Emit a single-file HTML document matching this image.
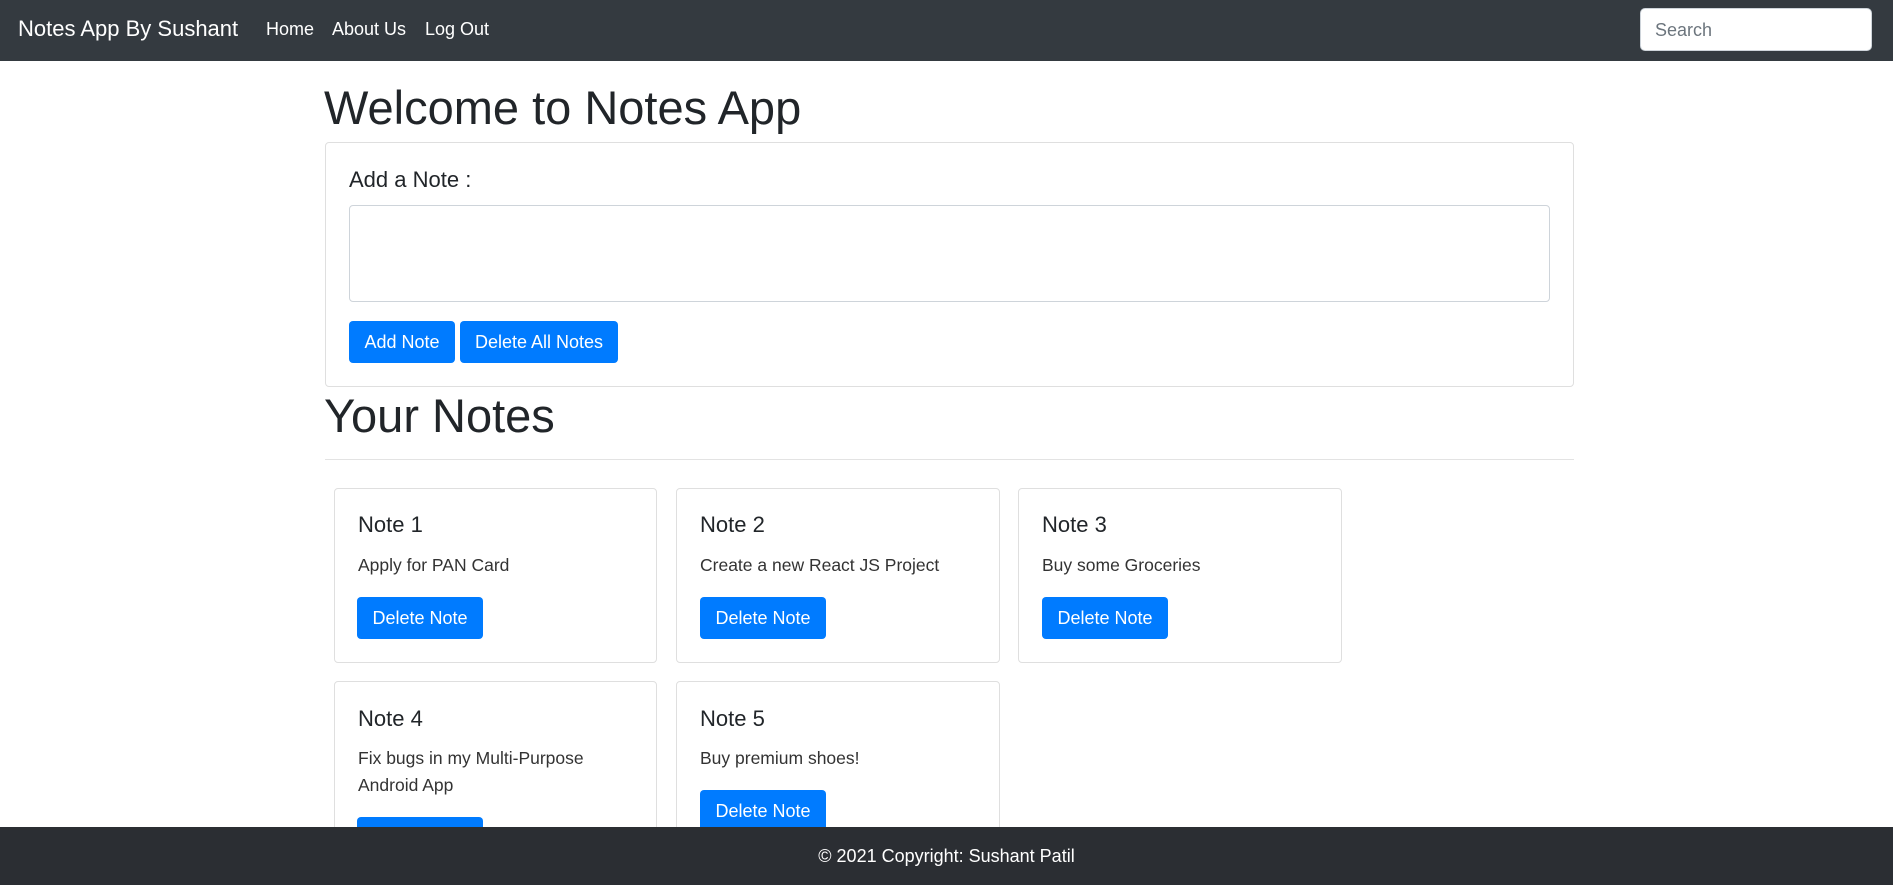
<!DOCTYPE html>
<html><head><meta charset="utf-8"><style>
*{box-sizing:border-box;margin:0;padding:0}
body{width:1893px;height:885px;overflow:hidden;background:#fff;font-family:"Liberation Sans",sans-serif;color:#212529;position:relative}
.a{position:absolute;white-space:nowrap}
nav{position:absolute;left:0;top:0;width:1893px;height:61px;background:#343a40}
.nl{color:#fff;font-size:18px;top:19px}
.btn{position:absolute;background:#007bff;color:#fff;border-radius:4px;font-size:18px;display:flex;align-items:center;justify-content:center}
.card{position:absolute;border:1px solid #dfdfdf;border-radius:4px;background:#fff}
.ct{font-size:22px;}
.cx{font-size:17.5px;color:#333;line-height:27px}
</style></head><body>
<nav>
<div class="a" style="left:18px;top:16px;color:#fff;font-size:22px">Notes App By Sushant</div>
<div class="a nl" style="left:266px">Home</div>
<div class="a nl" style="left:332px">About Us</div>
<div class="a nl" style="left:425px">Log Out</div>
<div class="a" style="left:1640px;top:8px;width:232px;height:43px;background:#fff;border-radius:5px;border:1px solid #ced4da;color:#6c757d;font-size:18px;padding:11px 14px">Search</div>
</nav>
<div class="a" style="left:324px;top:80px;font-size:47px;font-weight:500">Welcome to Notes App</div>
<div class="card" style="left:325px;top:142px;width:1249px;height:245px"></div>
<div class="a" style="left:349px;top:167px;font-size:22px">Add a Note :</div>
<div class="a" style="left:349px;top:205px;width:1201px;height:97px;border:1px solid #ced4da;border-radius:4px"></div>
<div class="btn" style="left:349px;top:321px;width:106px;height:42px">Add Note</div>
<div class="btn" style="left:460px;top:321px;width:158px;height:42px">Delete All Notes</div>
<div class="a" style="left:324px;top:388px;font-size:47px;font-weight:500">Your Notes</div>
<div class="a" style="left:325px;top:459px;width:1249px;height:1px;background:#e3e3e3"></div>

<div class="card" style="left:334px;top:488px;width:323px;height:175px"></div>
<div class="a ct" style="left:358px;top:512px">Note 1</div>
<div class="a cx" style="left:358px;top:552px">Apply for PAN Card</div>
<div class="btn" style="left:357px;top:597px;width:126px;height:42px">Delete Note</div>

<div class="card" style="left:676px;top:488px;width:324px;height:175px"></div>
<div class="a ct" style="left:700px;top:512px">Note 2</div>
<div class="a cx" style="left:700px;top:552px">Create a new React JS Project</div>
<div class="btn" style="left:700px;top:597px;width:126px;height:42px">Delete Note</div>

<div class="card" style="left:1018px;top:488px;width:324px;height:175px"></div>
<div class="a ct" style="left:1042px;top:512px">Note 3</div>
<div class="a cx" style="left:1042px;top:552px">Buy some Groceries</div>
<div class="btn" style="left:1042px;top:597px;width:126px;height:42px">Delete Note</div>

<div class="card" style="left:334px;top:681px;width:323px;height:200px"></div>
<div class="a ct" style="left:358px;top:706px">Note 4</div>
<div class="a cx" style="left:358px;top:745px">Fix bugs in my Multi-Purpose<br>Android App</div>
<div class="btn" style="left:357px;top:817px;width:126px;height:42px"></div>

<div class="card" style="left:676px;top:681px;width:324px;height:200px"></div>
<div class="a ct" style="left:700px;top:706px">Note 5</div>
<div class="a cx" style="left:700px;top:745px">Buy premium shoes!</div>
<div class="btn" style="left:700px;top:790px;width:126px;height:42px">Delete Note</div>

<div class="a" style="left:0;top:827px;width:1893px;height:58px;background:#2b2e33;color:#fff;font-size:18px;text-align:center;line-height:58px">© 2021 Copyright: Sushant Patil</div>
</body></html>
